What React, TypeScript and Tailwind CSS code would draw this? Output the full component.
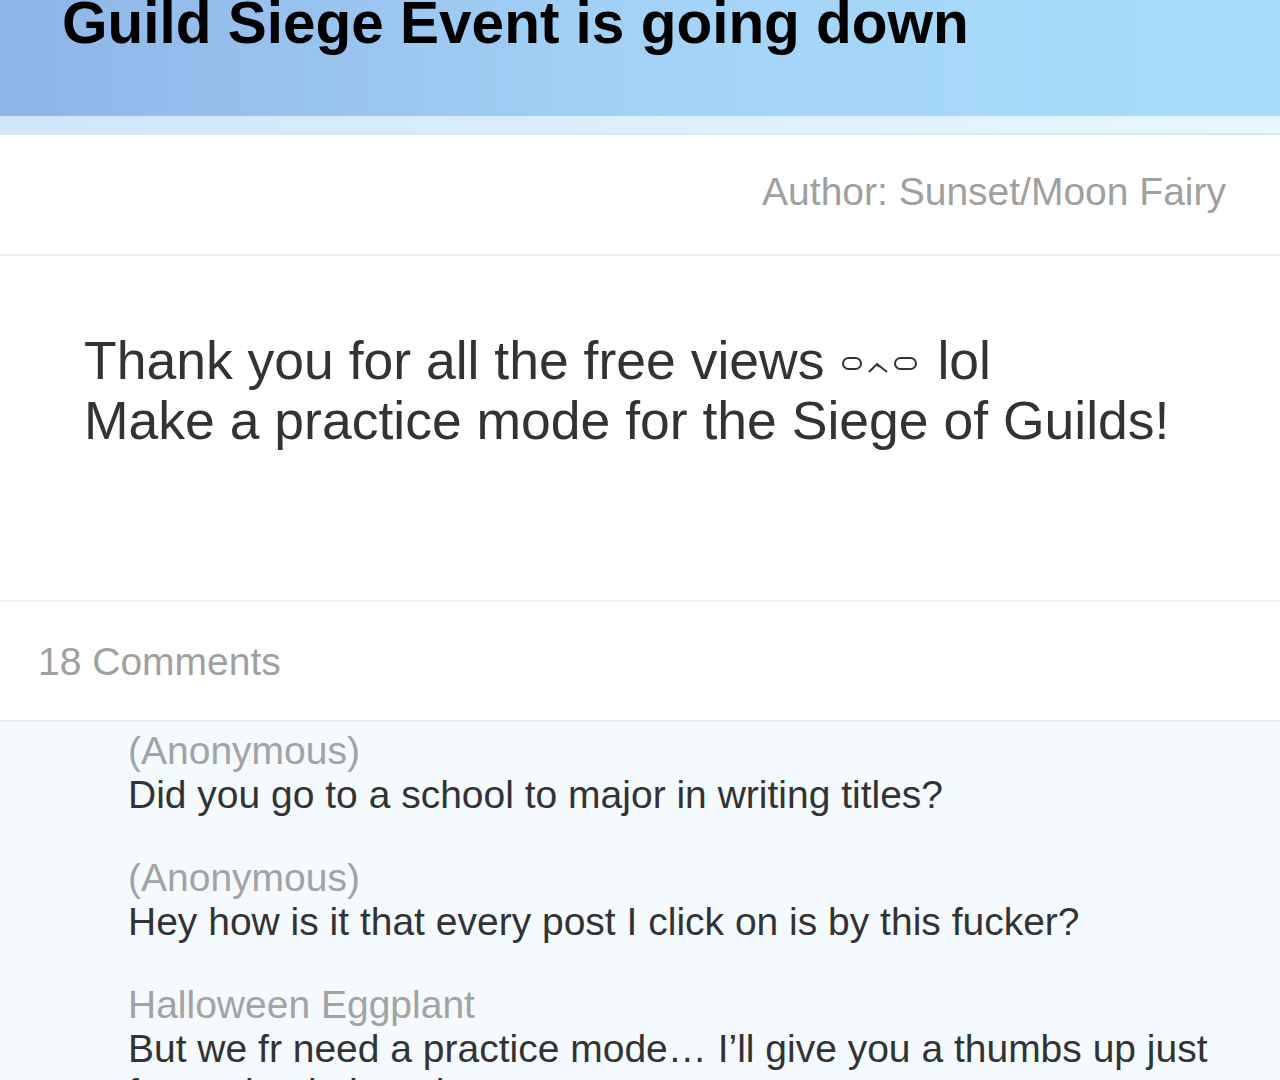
import React from "react";

const comments = [
  { name: "(Anonymous)", text: "Did you go to a school to major in writing titles?" },
  { name: "(Anonymous)", text: "Hey how is it that every post I click on is by this fucker?" },
  {
    name: "Halloween Eggplant",
    text: "But we fr need a practice mode… I’ll give you a thumbs up just for saying it though",
  },
];

export default function App() {
  return (
    <div
      className="w-[1280px] h-[1080px] overflow-hidden bg-white"
      style={{ fontFamily: '"Liberation Sans", Arial, Helvetica, sans-serif' }}
    >
      {/* Header */}
      <div className="h-[116px] flex flex-col bg-gradient-to-r from-[#8fb4e8] via-[#a3d2f6] to-[#a9ddfb] px-[62px]">
        <h1 className="mt-[-6px] text-[58.5px] leading-[58px] font-bold text-black">
          Guild Siege Event is going down
        </h1>
      </div>
      <div className="h-[17px] bg-gradient-to-r from-[#cfe6fb] to-[#e7f8fe]" />
      <div className="h-[2px] bg-[#dfe8f1]" />

      {/* Author */}
      <div className="h-[119px] flex items-center justify-end pr-[54px] pb-[4px]">
        <span className="text-[39px] text-[#a0a0a0]">Author: Sunset/Moon Fairy</span>
      </div>
      <div className="h-[2px] bg-[#ebeff6]" />

      {/* Body */}
      <div className="h-[344px] pl-[84px] pt-[75px] text-[53.5px] leading-[60px] text-[#333333]">
        <p className="flex items-center">
          <span>Thank you for all the free views</span>
          <span className="inline-flex items-center ml-[18px] mr-[20px] mt-[4px]">
            <span className="inline-block w-[20px] h-[13px] rounded-full border-[2px] border-[#333]" />
            <svg width="32" height="14" viewBox="0 0 32 14" className="mt-[8px]">
              <path d="M7 12 L15 4 L17 7 M15 4 L25 12" fill="none" stroke="#333" strokeWidth="2" />
            </svg>
            <span className="inline-block w-[23px] h-[13px] rounded-full border-[2px] border-[#333]" />
          </span>
          <span>lol</span>
        </p>
        <p>Make a practice mode for the Siege of Guilds!</p>
      </div>
      <div className="h-[2px] bg-[#eef2f7]" />

      {/* Comment count */}
      <div className="h-[118px] flex items-center pl-[38px] pt-[2px]">
        <span className="text-[39px] text-[#a0a0a0]">18 Comments</span>
      </div>
      <div className="h-[2px] bg-[#e6eff8]" />

      {/* Comments */}
      <div className="bg-[#f5fafe] pl-[128px] pr-[60px] pt-[7px] flex flex-col gap-[39px]">
        {comments.map((c, i) => (
          <div key={i} className="flex flex-col text-[39px] leading-[44px]">
            <span className="text-[#a3a3a3]">{c.name}</span>
            <span className="text-[#333333]">{c.text}</span>
          </div>
        ))}
      </div>
    </div>
  );
}
